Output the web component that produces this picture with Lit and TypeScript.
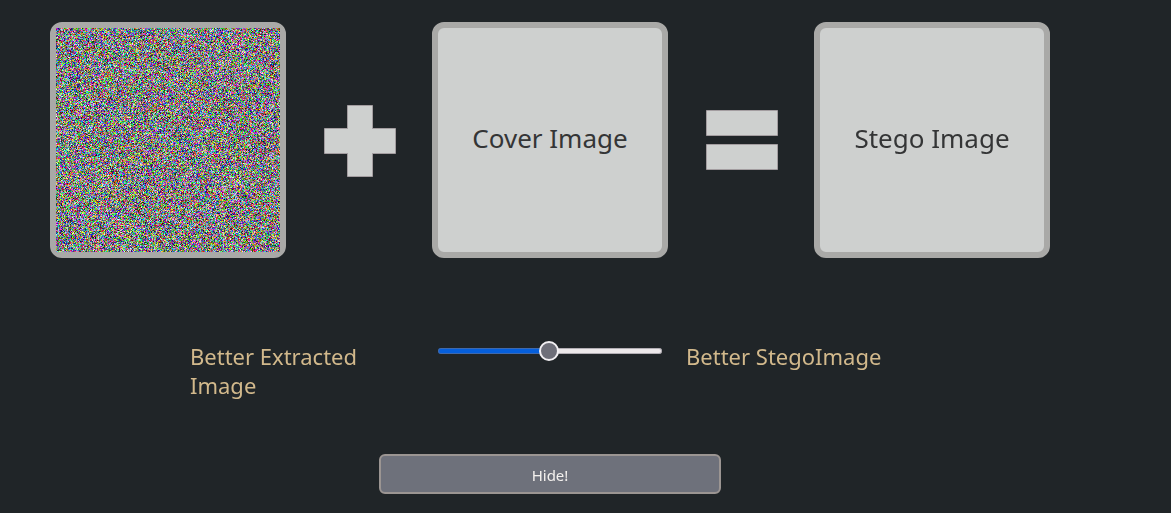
import { LitElement, html, css } from "lit";
import { customElement, state } from "lit/decorators.js";
import { styleMap } from "lit/directives/style-map.js";

const NOISE_SIZE = 224;

@customElement("noise-image")
class NoiseImage extends LitElement {
  static styles = css`
    :host {
      display: block;
    }
    .noise {
      display: block;
      width: 100%;
      height: 100%;
      image-rendering: pixelated;
    }
  `;

  render() {
    return html`<canvas class="noise" width=${NOISE_SIZE} height=${NOISE_SIZE} role="img" aria-label="Secret image"></canvas>`;
  }

  firstUpdated() {
    const canvas = this.renderRoot.querySelector("canvas") as HTMLCanvasElement;
    const context = canvas.getContext("2d");
    if (!context) return;
    const image = context.createImageData(NOISE_SIZE, NOISE_SIZE);
    let seed = 20231;
    const next = () => {
      seed ^= seed << 13;
      seed ^= seed >>> 17;
      seed ^= seed << 5;
      return (seed >>> 11) & 255;
    };
    for (let i = 0; i < image.data.length; i += 4) {
      image.data[i] = next();
      image.data[i + 1] = next();
      image.data[i + 2] = next();
      image.data[i + 3] = 255;
    }
    context.putImageData(image, 0, 0);
  }
}

@customElement("app-root")
class AppRoot extends LitElement {
  @state() private balance = 99;

  static styles = css`
    :host {
      display: block;
      box-sizing: border-box;
      min-height: 100vh;
      background: #202528;
      font-family: "Segoe UI", "Noto Sans", "Open Sans", sans-serif;
    }
    .page {
      box-sizing: border-box;
      max-width: 1100px;
      padding: 22px 50px 19px;
    }
    .equation {
      display: flex;
      align-items: center;
      justify-content: space-between;
    }
    .card {
      box-sizing: border-box;
      width: 236px;
      height: 236px;
      padding: 0;
      border: 6px solid #a9a9a7;
      border-radius: 12px;
      background: #ced0cf;
      color: #343536;
      font-family: inherit;
      font-size: 26px;
      line-height: 36px;
      cursor: pointer;
    }
    .card-label {
      display: block;
      padding-bottom: 4px;
    }
    .picture {
      width: 100%;
      height: 100%;
    }
    .symbol {
      display: block;
      width: 74px;
      height: 74px;
      fill: #ced0cf;
      stroke: #a39da0;
    }
    .tuning {
      display: grid;
      grid-template-columns: repeat(3, 224px);
      column-gap: 24px;
      justify-content: center;
      margin-top: 84px;
      color: #d2b98c;
      font-size: 22px;
      line-height: 29px;
    }
    .caption {
      display: block;
    }
    .slider {
      appearance: none;
      box-sizing: border-box;
      width: 100%;
      height: 18px;
      margin: 0;
      background: transparent;
    }
    .slider::-webkit-slider-runnable-track {
      box-sizing: border-box;
      height: 6px;
      border-radius: 3px;
      background: linear-gradient(to right, #055fdc var(--fill), #ece8ea var(--fill));
      box-shadow: inset 0 0 0 1px rgb(120 115 125 / 50%);
    }
    .slider::-webkit-slider-thumb {
      appearance: none;
      box-sizing: border-box;
      width: 20px;
      height: 20px;
      margin-top: -7px;
      border: 2px solid #f2f0f3;
      border-radius: 50%;
      background: #6e6f79;
    }
    .hide {
      display: block;
      box-sizing: border-box;
      width: 342px;
      height: 40px;
      margin: 54px auto 0;
      padding: 2px 0 0;
      border: 2px solid #9b9592;
      border-radius: 6px;
      background: #6e717b;
      color: #f4f1ee;
      font-family: inherit;
      font-size: 15px;
      line-height: 24px;
      cursor: pointer;
    }
  `;

  private onBalance(event: Event) {
    this.balance = Number((event.target as HTMLInputElement).value);
  }

  render() {
    const fill = styleMap({ "--fill": `${this.balance / 2}%` });
    return html`
      <main class="page">
        <div class="equation">
          <button class="card" type="button"><noise-image class="picture"></noise-image></button>
          <svg class="symbol" viewBox="0 0 74 74" aria-hidden="true">
            <path d="M25.5 2.5h25v23h23v25h-23v23h-25v-23h-23v-25h23z" />
          </svg>
          <button class="card" type="button"><span class="card-label">Cover Image</span></button>
          <svg class="symbol" viewBox="0 0 74 74" aria-hidden="true">
            <path d="M2.5 7.5h71v25h-71zM2.5 41.5h71v25h-71z" />
          </svg>
          <button class="card" type="button"><span class="card-label">Stego Image</span></button>
        </div>
        <div class="tuning">
          <label class="caption" for="balance">Better Extracted Image</label>
          <input class="slider" id="balance" type="range" min="0" max="200" .value=${String(this.balance)} style=${fill} @input=${this.onBalance} />
          <label class="caption" for="balance">Better StegoImage</label>
        </div>
        <button class="hide" type="button">Hide!</button>
      </main>
    `;
  }
}
